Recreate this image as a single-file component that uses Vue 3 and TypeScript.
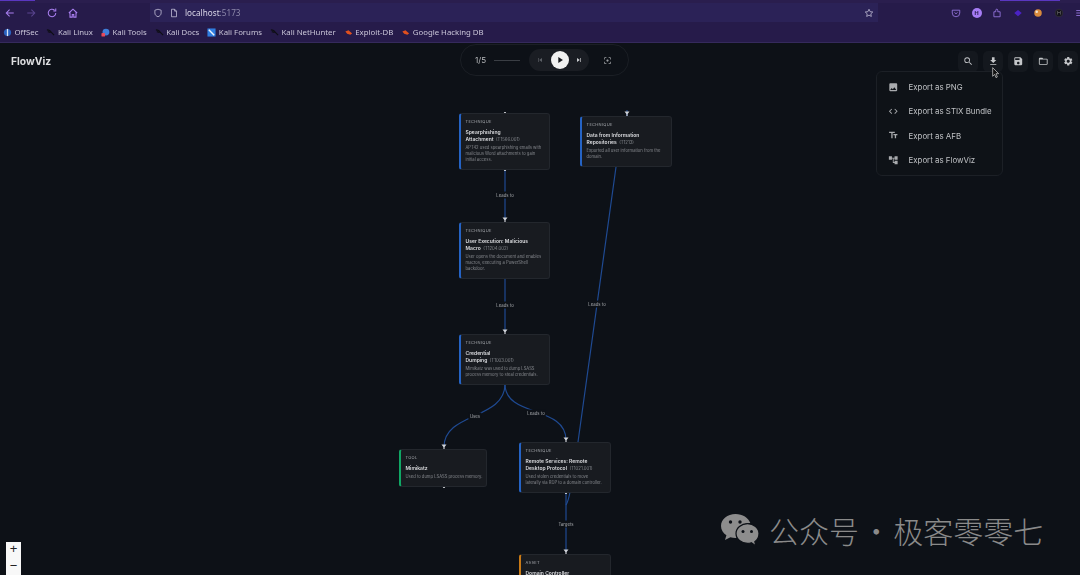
<script setup lang="ts">
interface FlowNode {
  kind: string
  color: string
  x: number
  y: number
  w: number
  lines: string[]
  id?: string
  desc: string[]
}
const CANVAS_TOP = 80
const nodes: FlowNode[] = [
  { kind: 'TECHNIQUE', color: '#2563c4', x: 459, y: 113, w: 91, lines: ['Spearphishing', 'Attachment'], id: '(T1566.001)', desc: ['APT42 used spearphishing emails with', 'malicious Word attachments to gain', 'initial access.'] },
  { kind: 'TECHNIQUE', color: '#2563c4', x: 580, y: 116, w: 92, lines: ['Data from Information', 'Repositories'], id: '(T1213)', desc: ['Exported all user information from the', 'domain.'] },
  { kind: 'TECHNIQUE', color: '#2563c4', x: 459, y: 222, w: 91, lines: ['User Execution: Malicious', 'Macro'], id: '(T1204.002)', desc: ['User opens the document and enables', 'macros, executing a PowerShell', 'backdoor.'] },
  { kind: 'TECHNIQUE', color: '#2563c4', x: 459, y: 334, w: 91, lines: ['Credential', 'Dumping'], id: '(T1003.001)', desc: ['Mimikatz was used to dump LSASS', 'process memory to steal credentials.'] },
  { kind: 'TOOL', color: '#10a765', x: 399, y: 449, w: 88, lines: ['Mimikatz'], desc: ['Used to dump LSASS process memory.'] },
  { kind: 'TECHNIQUE', color: '#2563c4', x: 519, y: 442, w: 92, lines: ['Remote Services: Remote', 'Desktop Protocol'], id: '(T1021.001)', desc: ['Used stolen credentials to move', 'laterally via RDP to a domain controller.'] },
  { kind: 'ASSET', color: '#c97a16', x: 519, y: 554, w: 92, lines: ['Domain Controller'], desc: ['Primary domain controller for the'] }
]
const edges: string[] = [
  'M505 170 L505 220',
  'M505 278 L505 332',
  'M505 384 C505 420 444 412 444 447',
  'M505 384 C505 418 566 405 566 440',
  'M566 505 C569 500 570 495 578 442 L616 167 L627 116 L627 110',
  'M566 493 L566 552'
]
const labels = [
  { text: 'Leads to', x: 505, y: 195 },
  { text: 'Leads to', x: 505, y: 305 },
  { text: 'Leads to', x: 597, y: 304 },
  { text: 'Uses', x: 475, y: 416 },
  { text: 'Leads to', x: 536, y: 413 },
  { text: 'Targets', x: 566, y: 524 }
]
const arrows: [number, number][] = [[505, 222], [505, 334], [444, 449], [566, 442], [566, 554], [627, 116]]
const dots: [number, number][] = [[505, 113], [505, 170], [505, 278], [505, 384], [627, 166], [444, 487], [566, 493]]
const bookmarks = [
  { name: 'OffSec', icon: 'off' },
  { name: 'Kali Linux', icon: 'kali' },
  { name: 'Kali Tools', icon: 'tools' },
  { name: 'Kali Docs', icon: 'kali' },
  { name: 'Kali Forums', icon: 'forums' },
  { name: 'Kali NetHunter', icon: 'kali' },
  { name: 'Exploit-DB', icon: 'db' },
  { name: 'Google Hacking DB', icon: 'db' }
]
const tools = [
  'M15.5 14h-.79l-.28-.27A6.471 6.471 0 0 0 16 9.5 6.5 6.5 0 1 0 9.5 16c1.61 0 3.09-.59 4.23-1.57l.27.28v.79l5 4.99L20.49 19l-4.99-5zm-6 0C7.01 14 5 11.99 5 9.5S7.01 5 9.5 5 14 7.01 14 9.5 11.99 14 9.5 14z',
  'M19 9h-4V3H9v6H5l7 7 7-7zM5 18v2h14v-2H5z',
  'M17 3H5c-1.11 0-2 .9-2 2v14c0 1.1.89 2 2 2h14c1.1 0 2-.9 2-2V7l-4-4zm-5 16c-1.66 0-3-1.34-3-3s1.34-3 3-3 3 1.34 3 3-1.34 3-3 3zm3-10H5V5h10v4z',
  'M20 6h-8l-2-2H4c-1.1 0-2 .9-2 2v12c0 1.1.9 2 2 2h16c1.1 0 2-.9 2-2V8c0-1.1-.9-2-2-2zm0 12H4V8h16v10z',
  'M19.14 12.94c.04-.3.06-.61.06-.94 0-.32-.02-.64-.07-.94l2.03-1.58a.49.49 0 0 0 .12-.61l-1.92-3.32a.488.488 0 0 0-.59-.22l-2.39.96c-.5-.38-1.03-.7-1.62-.94l-.36-2.54a.484.484 0 0 0-.48-.41h-3.84c-.24 0-.43.17-.47.41l-.36 2.54c-.59.24-1.13.57-1.62.94l-2.39-.96c-.22-.08-.47 0-.59.22L2.74 8.87c-.12.21-.08.47.12.61l2.03 1.58c-.05.3-.09.63-.09.94s.02.64.07.94l-2.03 1.58a.49.49 0 0 0-.12.61l1.92 3.32c.12.22.37.29.59.22l2.39-.96c.5.38 1.03.7 1.62.94l.36 2.54c.05.24.24.41.48.41h3.84c.24 0 .44-.17.47-.41l.36-2.54c.59-.24 1.13-.56 1.62-.94l2.39.96c.22.08.47 0 .59-.22l1.92-3.32c.12-.22.07-.47-.12-.61l-2.01-1.58zM12 15.6c-1.98 0-3.6-1.62-3.6-3.6s1.62-3.6 3.6-3.6 3.6 1.62 3.6 3.6-1.62 3.6-3.6 3.6z'
]
const exportsMenu = [
  { label: 'Export as PNG', d: 'M21 19V5c0-1.1-.9-2-2-2H5c-1.1 0-2 .9-2 2v14c0 1.1.9 2 2 2h14c1.1 0 2-.9 2-2zM8.5 13.5l2.5 3.01L14.5 12l4.5 6H5l3.5-4.5z' },
  { label: 'Export as STIX Bundle', d: 'M9.4 16.6 4.8 12l4.6-4.6L8 6l-6 6 6 6 1.4-1.4zm5.2 0 4.6-4.6-4.6-4.6L16 6l6 6-6 6-1.4-1.4z' },
  { label: 'Export as AFB', d: 'M2.5 4v3h5v12h3V7h5V4h-13zm19 5h-9v3h3v7h3v-7h3V9z' },
  { label: 'Export as FlowViz', d: 'M22 11V3h-7v3H9V3H2v8h7V8h2v10h4v3h7v-8h-7v3h-2V8h2v3h7z' }
]
</script>

<template>
  <div class="root">
    <div class="chrome">
      <div class="tabstrip"><span class="tab-a"></span><span class="tab-gap"></span><span class="tab-b"></span></div>
      <div class="navbar">
        <div class="navbtns">
          <svg class="nav-ic" viewBox="0 0 16 16"><path d="M13 8H3.5M7.5 3.5 3 8l4.5 4.5" /></svg>
          <svg class="nav-ic dim" viewBox="0 0 16 16"><path d="M3 8h9.5M8.5 3.5 13 8l-4.5 4.5" /></svg>
          <svg class="nav-ic" viewBox="0 0 16 16"><path d="M13 8a5 5 0 1 1-1.6-3.7M13 2v3.2H9.8" /></svg>
          <svg class="nav-ic" viewBox="0 0 16 16"><path d="M2.5 8 8 2.8 13.5 8M4 7v6.5h3V10h2v3.5h3V7" /></svg>
        </div>
        <div class="urlbar">
          <svg class="url-ic" viewBox="0 0 16 16"><path d="M8 2 3 3.5V8c0 3 2.200 5 5 6 2.800-1 5-3 5-6V3.500z" /></svg>
          <svg class="url-ic" viewBox="0 0 16 16"><path d="M4 2h5l3 3v9H4zM9 2v3h3" /></svg>
          <span class="host">localhost<span class="port">:5173</span></span>
          <svg class="url-ic star" viewBox="0 0 16 16"><path d="m8 2 1.800 3.900 4.200.5-3.100 2.900.8 4.200L8 11.400l-3.700 2.100.8-4.200L2 6.400l4.200-.5z" /></svg>
        </div>
        <div class="exts">
          <svg class="ext" viewBox="0 0 16 16"><path class="purple-line" d="M2 3.500h12V8a6 6 0 0 1-12 0zM5.500 7 8 9.300 10.500 7" /></svg>
          <span class="ext-h">H</span>
          <svg class="ext" viewBox="0 0 16 16"><path class="purple-line" d="M3 6h3V3.500a1.600 1.600 0 0 1 3.200 0V6H13v8H3z" /></svg>
          <svg class="ext" viewBox="0 0 16 16"><path d="M8 3l6 5-6 5-6-5z" fill="#4a22c4" /></svg>
          <svg class="ext" viewBox="0 0 16 16"><circle cx="8" cy="8" r="6" fill="#d98a3c" /><circle cx="6" cy="6" r="2" fill="#f0e4d4" /></svg>
          <svg class="ext" viewBox="0 0 16 16"><circle cx="8" cy="8" r="6" fill="#14121c" stroke="#3a3a3a" /><path d="M5.500 10.500v-5L8 8l2.500-2.500v5" fill="none" stroke="#777" /></svg>
          <svg class="ext" viewBox="0 0 16 16"><path class="purple-line" d="M2 4h12M2 8h12M2 12h12" /></svg>
        </div>
      </div>
      <div class="bookmarks">
        <div v-for="b in bookmarks" :key="b.name" class="bm">
          <svg class="bm-ic" viewBox="0 0 10 10">
            <template v-if="b.icon === 'off'">
              <circle cx="5" cy="5" r="4" fill="#2a62c0" /><path d="M5 1v8" stroke="#d8e2f4" stroke-width="1.400" />
            </template>
            <template v-else-if="b.icon === 'kali'">
              <path d="M1 2c3 0 4 1 5 3l3 3M2 4l3 1" stroke="#0e0e14" stroke-width="1.300" fill="none" />
            </template>
            <template v-else-if="b.icon === 'tools'">
              <circle cx="5.500" cy="4.500" r="3.800" fill="#3f7ed8" /><rect x="0.500" y="5.500" width="4" height="4" rx="1" fill="#e84a5a" />
            </template>
            <template v-else-if="b.icon === 'forums'">
              <rect x="0.500" y="0.500" width="9" height="9" fill="#2f7de0" /><path d="M2 2l6 6" stroke="#eef4fc" stroke-width="1.600" />
            </template>
            <template v-else>
              <path d="M1.500 4 5 2.500 9 6 7 7.500 3.500 6.500z" fill="#e0501e" />
            </template>
          </svg>
          <span>{{ b.name }}</span>
        </div>
      </div>
    </div>

    <div class="app">
      <header class="head">
        <div class="logo">FlowViz</div>
        <div class="player">
          <span class="count">1/5</span>
          <span class="track"></span>
          <div class="ctrls">
            <svg class="c-ic faint" viewBox="0 0 24 24"><path d="M6 6h2v12H6zm3.500 6 8.500 6V6z" /></svg>
            <span class="playbtn"><svg viewBox="0 0 24 24"><path d="M8 5v14l11-7z" /></svg></span>
            <svg class="c-ic" viewBox="0 0 24 24"><path d="M6 18l8.500-6L6 6v12zM16 6v12h2V6h-2z" /></svg>
          </div>
          <svg class="c-ic focus" viewBox="0 0 24 24"><path d="M5 15H3v4c0 1.100.9 2 2 2h4v-2H5v-4zM5 5h4V3H5c-1.100 0-2 .9-2 2v4h2V5zm14-2h-4v2h4v4h2V5c0-1.100-.9-2-2-2zm0 16h-4v2h4c1.100 0 2-.9 2-2v-4h-2v4zM12 9c-1.660 0-3 1.340-3 3s1.340 3 3 3 3-1.340 3-3-1.340-3-3-3z" /></svg>
        </div>
        <div class="tools">
          <button v-for="(d, i) in tools" :key="i" class="tool" type="button">
            <svg viewBox="0 0 24 24"><path :d="d" /></svg>
          </button>
        </div>
      </header>

      <main class="canvas">
        <svg class="edges" viewBox="0 80 1080 495">
          <path v-for="(d, i) in edges" :key="i" :d="d" class="edge" />
          <g v-for="(a, i) in arrows" :key="'a' + i" class="arrow" :transform="`translate(${a[0]} ${a[1]})`">
            <path d="M-2.500 -4.500 H2.500 L0.600 -2 V0 H-0.600 V-2 Z" />
          </g>
          <circle v-for="(p, i) in dots" :key="'d' + i" :cx="p[0]" :cy="p[1]" r="1.100" fill="#e4e6ea" />
        </svg>

        <article
          v-for="n in nodes"
          :key="n.lines[0]"
          class="node"
          :style="{ left: n.x + 'px', top: n.y - CANVAS_TOP + 'px', width: n.w + 'px', borderLeftColor: n.color }"
        >
          <div class="kind">{{ n.kind }}</div>
          <div class="title">
            <div v-for="(l, i) in n.lines" :key="l">{{ l }}<span v-if="n.id && i === n.lines.length - 1" class="tid">{{ n.id }}</span></div>
          </div>
          <div class="desc">
            <div v-for="l in n.desc" :key="l">{{ l }}</div>
          </div>
        </article>

        <span
          v-for="(l, i) in labels"
          :key="'l' + i"
          class="edge-label"
          :style="{ left: l.x + 'px', top: l.y - CANVAS_TOP + 'px' }"
        >{{ l.text }}</span>

        <div class="zoom">
          <button class="zbtn" type="button">+</button>
          <button class="zbtn" type="button">−</button>
        </div>

        <div class="mark">
          <svg class="mark-ic" viewBox="0 0 40 34">
            <path d="M15.500 1C7.500 1 1 6.300 1 13c0 3.800 2.100 7 5.400 9.300L5 27l5.400-2.700c1.700.5 3.300.8 5.100.8h1.200c-.5-1.300-.7-2.500-.7-3.800 0-6.200 6-11.200 13.500-11.200h.8C28.600 4.800 22.600 1 15.500 1z" fill="#8d8d8d" />
            <path d="M39 20.500c0-5.400-5.400-9.800-11.500-9.800S16 15.100 16 20.500s5.400 9.800 11.500 9.800c1.300 0 2.600-.2 3.800-.6L36 33l-1.200-4.300c2.600-1.900 4.200-4.800 4.200-8.200z" fill="#8d8d8d" stroke="#0d1117" stroke-width="1.200" />
            <circle cx="10.500" cy="9" r="1.700" fill="#0d1117" /><circle cx="20" cy="9" r="1.700" fill="#0d1117" />
            <circle cx="23" cy="18.500" r="1.500" fill="#0d1117" /><circle cx="31.500" cy="18.500" r="1.500" fill="#0d1117" />
          </svg>
          <span>公众号 · 极客零零七</span>
        </div>
      </main>

      <div class="menu">
        <div v-for="m in exportsMenu" :key="m.label" class="menu-item">
          <svg viewBox="0 0 24 24"><path :d="m.d" /></svg>
          <span>{{ m.label }}</span>
        </div>
      </div>

      <svg class="cursor" viewBox="0 0 12 18"><path d="M1 1v13l3-3 2 5 2-1-2-5h4z" fill="#111" stroke="#ddd" stroke-width="1" /></svg>
    </div>
  </div>
</template>

<style>
html, body { margin: 0; background: #0d1117; }
</style>

<style scoped>
.root { width: 1080px; height: 575px; display: flex; flex-direction: column; overflow: hidden; background: #0d1117; font-family: Inter, "Noto Sans", sans-serif; }
.chrome { height: 43px; flex: none; background: #261b4a; display: flex; flex-direction: column; border-bottom: 1px solid #352a5c; box-sizing: border-box; font-family: "Noto Sans", sans-serif; filter: blur(.3px); }
.tabstrip { height: 3px; flex: none; display: flex; background: #2a1e4e; }
.tab-a { width: 35px; height: 1px; background: #5a37c0; }
.tab-gap { flex: 1; }
.tab-b { width: 60px; height: 1px; margin-right: 20px; background: #5a37c0; }
.navbar { height: 19px; flex: none; display: flex; align-items: center; }
.navbtns { width: 150px; flex: none; display: flex; gap: 9px; padding-left: 4px; box-sizing: border-box; }
.nav-ic { width: 12px; height: 12px; fill: none; stroke: #a97ff0; stroke-width: 1.400; }
.nav-ic.dim { stroke: #5a4590; }
.urlbar { width: 728px; height: 19px; flex: none; display: flex; align-items: center; gap: 6px; padding: 0 4px 0 3px; box-sizing: border-box; background: #2b2257; color: #cfcce0; font-size: 8.200px; }
.url-ic { width: 10px; height: 10px; fill: none; stroke: #c9c6dc; stroke-width: 1.200; flex: none; }
.url-ic.star { margin-left: auto; }
.host { color: #d8d5e6; }
.port { color: #8d88aa; }
.exts { flex: 1; display: flex; align-items: center; justify-content: flex-start; gap: 10.600px; padding-left: 73px; overflow: hidden; }
.ext { width: 10px; height: 10px; flex: none; }
.purple-line { fill: none; stroke: #9d7be8; stroke-width: 1.300; }
.ext-h { width: 10px; height: 10px; flex: none; border-radius: 50%; background: #a67cf5; color: #2a1e4e; font-size: 6px; font-weight: 700; line-height: 10px; text-align: center; }
.bookmarks { height: 20px; flex: none; display: flex; align-items: center; gap: 8px; padding-left: 3px; color: #c9c5d8; font-size: 7.800px; }
.bm { display: flex; align-items: center; gap: 2.500px; white-space: nowrap; }
.bm-ic { width: 9px; height: 9px; flex: none; }

.app { position: relative; flex: 1; min-height: 0; display: flex; flex-direction: column; }
.head { height: 37px; flex: none; position: relative; display: flex; align-items: center; justify-content: space-between; padding: 0 2px 2px 11px; box-sizing: border-box; filter: blur(.3px); }
.logo { color: #dedfe1; font-size: 10.300px; font-weight: 700; }
.player { position: absolute; left: 460px; top: 1px; width: 169px; height: 32px; box-sizing: border-box; display: flex; align-items: center; border: 1px solid #1b1f25; border-radius: 16px; padding-left: 14px; }
.count { color: #b9bbbe; font-size: 8px; width: 12px; }
.track { width: 26px; height: 1px; margin-left: 7px; background: #3a3e44; }
.ctrls { width: 60px; height: 22px; margin-left: 9px; display: flex; align-items: center; justify-content: space-between; box-sizing: border-box; padding: 0 6px 0 7px; background: #1a1d23; border-radius: 11px; }
.c-ic { width: 8px; height: 8px; fill: #c9cbce; flex: none; }
.c-ic.faint { fill: #5c6066; }
.c-ic.focus { margin-left: 14px; width: 9px; height: 9px; fill: #9a9da1; }
.playbtn { width: 18px; height: 18px; margin-left: 1px; border-radius: 50%; background: #f1f1f1; display: flex; align-items: center; justify-content: center; }
.playbtn svg { width: 10px; height: 10px; fill: #17191d; }
.tools { display: flex; gap: 4.500px; margin-top: 2px; }
.tool { width: 20.500px; height: 20.500px; padding: 0; border: 0; border-radius: 5px; background: #14181e; display: flex; align-items: center; justify-content: center; }
.tool svg { width: 10.500px; height: 10.500px; fill: #c4c6c9; }

.canvas { position: relative; flex: 1; min-height: 0; overflow: hidden; }
.edges { position: absolute; left: 0; top: 0; width: 1080px; height: 495px; }
.edge { fill: none; stroke: #1f4a92; stroke-width: 1.200; }
.arrow path { fill: #d0d3d8; }
.node { position: absolute; box-sizing: border-box; padding: 5px 4.500px 5.900px 4.500px; background: #181b20; border: 1px solid #23272d; border-left: 2px solid #2563c4; border-radius: 3px; filter: blur(.3px); }
.kind { height: 6px; line-height: 6px; font-size: 4px; letter-spacing: .3px; color: #a4a7ac; margin-bottom: 3.500px; }
.title { font-size: 5px; line-height: 7px; font-weight: 600; color: #dcdde0; margin-bottom: 2px; white-space: nowrap; }
.tid { margin-left: 2.500px; font-size: 4.300px; font-weight: 400; color: #85888d; }
.desc { font-size: 4.150px; line-height: 6.200px; color: #84878c; white-space: nowrap; }
.edge-label { position: absolute; transform: translate(-50%, -50%); padding: 1px 1.500px; background: #0d1117; color: #a6a9ad; font-size: 4.300px; line-height: 5px; white-space: nowrap; filter: blur(.25px); }

.zoom { position: absolute; left: 6px; bottom: 0; width: 15px; display: flex; flex-direction: column; }
.zbtn { width: 15px; height: 16.500px; padding: 0 0 2px; border: 0; background: #f8f8f8; color: #222; font-size: 13px; line-height: 14px; font-family: "Liberation Sans", sans-serif; }
.mark { position: absolute; left: 719px; top: 431px; display: flex; align-items: center; gap: 8px; color: #8a8a8a; font-family: "Noto Sans CJK SC", sans-serif; font-weight: 300; font-size: 30px; word-spacing: -4.500px; line-height: 38px; white-space: nowrap; }
.mark-ic { width: 42px; height: 34px; flex: none; }

.menu { position: absolute; left: 876px; top: 28px; width: 127px; height: 105px; box-sizing: border-box; display: flex; flex-direction: column; justify-content: center; padding: 3px 0; background: #0e1217; border: 1px solid #1c2026; border-radius: 6px; filter: blur(.3px); }
.menu-item { height: 24.500px; display: flex; align-items: center; padding-left: 11px; gap: 10px; color: #bfc1c4; font-size: 7.900px; }
.menu-item svg { width: 10.500px; height: 10.500px; fill: #a9abae; flex: none; }
.cursor { position: absolute; left: 992px; top: 24px; width: 8px; height: 12px; }
</style>
